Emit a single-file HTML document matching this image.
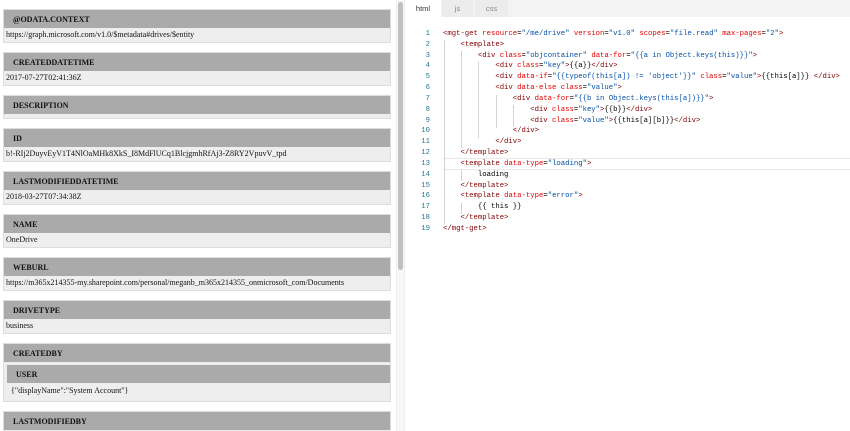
<!DOCTYPE html>
<html><head><meta charset="utf-8"><style>
*{margin:0;padding:0;box-sizing:border-box}
body{width:850px;height:431px;overflow:hidden;background:#fff;position:relative;font-family:"Liberation Serif",serif}
#left{position:absolute;left:0;top:0;width:396px;height:431px;overflow:hidden;padding:9px 0 0 3px}
.blk{width:388px;border:1px solid #ddd;background:#eee;margin-bottom:9px}
.k{background:#aaa;height:18px;line-height:19px;font-weight:bold;font-size:8px;padding-left:9px;color:#111;text-transform:uppercase}
.v{font-size:8px;line-height:14px;height:14px;padding-left:2px;color:#111}
.v.e{height:4px}
.inner{margin:3px 0 0 3px;width:383px;border:none}
#sb{position:absolute;left:396px;top:0;width:9px;height:431px;background:#f7f7f7;border-left:1px solid #eee;border-right:1px solid #eee}
#thumb{position:absolute;left:398px;top:2px;width:5px;height:268px;background:#c1c1c1;border-radius:3px}
#right{position:absolute;left:405px;top:0;width:445px;height:431px;background:#fff}
#tabs{height:17px;background:#f3f3f3;position:relative}
.tab{position:absolute;top:0;height:17px;line-height:18px;font-family:"Liberation Sans",sans-serif;font-size:7.5px;color:#888;text-align:center;background:#ececec}
.tab.a{background:#fff;color:#333}
#code{position:absolute;top:29px;left:0;width:445px;font-family:"Liberation Mono",monospace;font-size:7.28px}
.ln{height:10.83px;line-height:10.83px;white-space:pre;position:relative}
.n{position:absolute;left:0;width:25px;text-align:right;color:#237893}
.c{position:absolute;left:38px;color:#000}
.t{color:#800000}.at{color:#e50000}.s{color:#0451a5}
.g{position:absolute;width:1px;background:#d3d3d3}
.cur{position:absolute;left:38px;right:0;top:129px;height:12px;border-top:1px solid #e8e8e8;border-bottom:1px solid #e8e8e8}
</style></head><body>
<div id="left">
<div class="blk"><div class="k">@odata.context</div><div class="v">https://graph.microsoft.com/v1.0/$metadata#drives/$entity</div></div>
<div class="blk"><div class="k">createdDateTime</div><div class="v">2017-07-27T02:41:36Z</div></div>
<div class="blk"><div class="k">description</div><div class="v e"></div></div>
<div class="blk"><div class="k">id</div><div class="v">b!-RIj2DuyvEyV1T4NlOaMHk8XkS_I8MdFlUCq1BlcjgmhRfAj3-Z8RY2VpuvV_tpd</div></div>
<div class="blk"><div class="k">lastModifiedDateTime</div><div class="v">2018-03-27T07:34:38Z</div></div>
<div class="blk"><div class="k">name</div><div class="v">OneDrive</div></div>
<div class="blk"><div class="k">webUrl</div><div class="v">https://m365x214355-my.sharepoint.com/personal/meganb_m365x214355_onmicrosoft_com/Documents</div></div>
<div class="blk"><div class="k">driveType</div><div class="v">business</div></div>
<div class="blk"><div class="k">createdBy</div><div class="blk inner" style="margin-bottom:0"><div class="k">user</div><div class="v" style="height:18px;line-height:16px;padding-left:4px">{"displayName":"System Account"}</div></div></div>
<div class="blk"><div class="k">lastModifiedBy</div><div class="blk inner"><div class="k">user</div></div></div>
</div>
<div id="sb"></div><div id="thumb"></div>
<div id="right">
<div id="tabs"><div class="tab a" style="left:0;width:36px">html</div><div class="tab" style="left:37px;width:31px">js</div><div class="tab" style="left:70px;width:33px">css</div></div>
<div id="code">
<div class="cur"></div>
<div class="g" style="left:39px;top:11px;height:184px"></div>
<div class="g" style="left:56px;top:22px;height:97px"></div>
<div class="g" style="left:56px;top:141px;height:11px"></div>
<div class="g" style="left:56px;top:174px;height:11px"></div>
<div class="g" style="left:73px;top:33px;height:76px"></div>
<div class="g" style="left:91px;top:66px;height:33px"></div>
<div class="g" style="left:108px;top:76px;height:22px"></div>
<div class="ln"><span class="n">1</span><span class="c"><span class="t">&lt;mgt-get</span> <span class="at">resource</span>=<span class="s">"/me/drive"</span> <span class="at">version</span>=<span class="s">"v1.0"</span> <span class="at">scopes</span>=<span class="s">"file.read"</span> <span class="at">max-pages</span>=<span class="s">"2"</span><span class="t">&gt;</span></span></div>
<div class="ln"><span class="n">2</span><span class="c">    <span class="t">&lt;template&gt;</span></span></div>
<div class="ln"><span class="n">3</span><span class="c">        <span class="t">&lt;div</span> <span class="at">class</span>=<span class="s">"objcontainer"</span> <span class="at">data-for</span>=<span class="s">"{{a in Object.keys(this)}}"</span><span class="t">&gt;</span></span></div>
<div class="ln"><span class="n">4</span><span class="c">            <span class="t">&lt;div</span> <span class="at">class</span>=<span class="s">"key"</span><span class="t">&gt;</span>{{a}}<span class="t">&lt;/div&gt;</span></span></div>
<div class="ln"><span class="n">5</span><span class="c">            <span class="t">&lt;div</span> <span class="at">data-if</span>=<span class="s">"{{typeof(this[a]) != 'object'}}"</span> <span class="at">class</span>=<span class="s">"value"</span><span class="t">&gt;</span>{{this[a]}} <span class="t">&lt;/div&gt;</span></span></div>
<div class="ln"><span class="n">6</span><span class="c">            <span class="t">&lt;div</span> <span class="at">data-else</span> <span class="at">class</span>=<span class="s">"value"</span><span class="t">&gt;</span></span></div>
<div class="ln"><span class="n">7</span><span class="c">                <span class="t">&lt;div</span> <span class="at">data-for</span>=<span class="s">"{{b in Object.keys(this[a])}}"</span><span class="t">&gt;</span></span></div>
<div class="ln"><span class="n">8</span><span class="c">                    <span class="t">&lt;div</span> <span class="at">class</span>=<span class="s">"key"</span><span class="t">&gt;</span>{{b}}<span class="t">&lt;/div&gt;</span></span></div>
<div class="ln"><span class="n">9</span><span class="c">                    <span class="t">&lt;div</span> <span class="at">class</span>=<span class="s">"value"</span><span class="t">&gt;</span>{{this[a][b]}}<span class="t">&lt;/div&gt;</span></span></div>
<div class="ln"><span class="n">10</span><span class="c">                <span class="t">&lt;/div&gt;</span></span></div>
<div class="ln"><span class="n">11</span><span class="c">            <span class="t">&lt;/div&gt;</span></span></div>
<div class="ln"><span class="n">12</span><span class="c">    <span class="t">&lt;/template&gt;</span></span></div>
<div class="ln"><span class="n">13</span><span class="c">    <span class="t">&lt;template</span> <span class="at">data-type</span>=<span class="s">"loading"</span><span class="t">&gt;</span></span></div>
<div class="ln"><span class="n">14</span><span class="c">        loading</span></div>
<div class="ln"><span class="n">15</span><span class="c">    <span class="t">&lt;/template&gt;</span></span></div>
<div class="ln"><span class="n">16</span><span class="c">    <span class="t">&lt;template</span> <span class="at">data-type</span>=<span class="s">"error"</span><span class="t">&gt;</span></span></div>
<div class="ln"><span class="n">17</span><span class="c">        {{ this }}</span></div>
<div class="ln"><span class="n">18</span><span class="c">    <span class="t">&lt;/template&gt;</span></span></div>
<div class="ln"><span class="n">19</span><span class="c"><span class="t">&lt;/mgt-get&gt;</span></span></div>
</div>
</div>
</body></html>
